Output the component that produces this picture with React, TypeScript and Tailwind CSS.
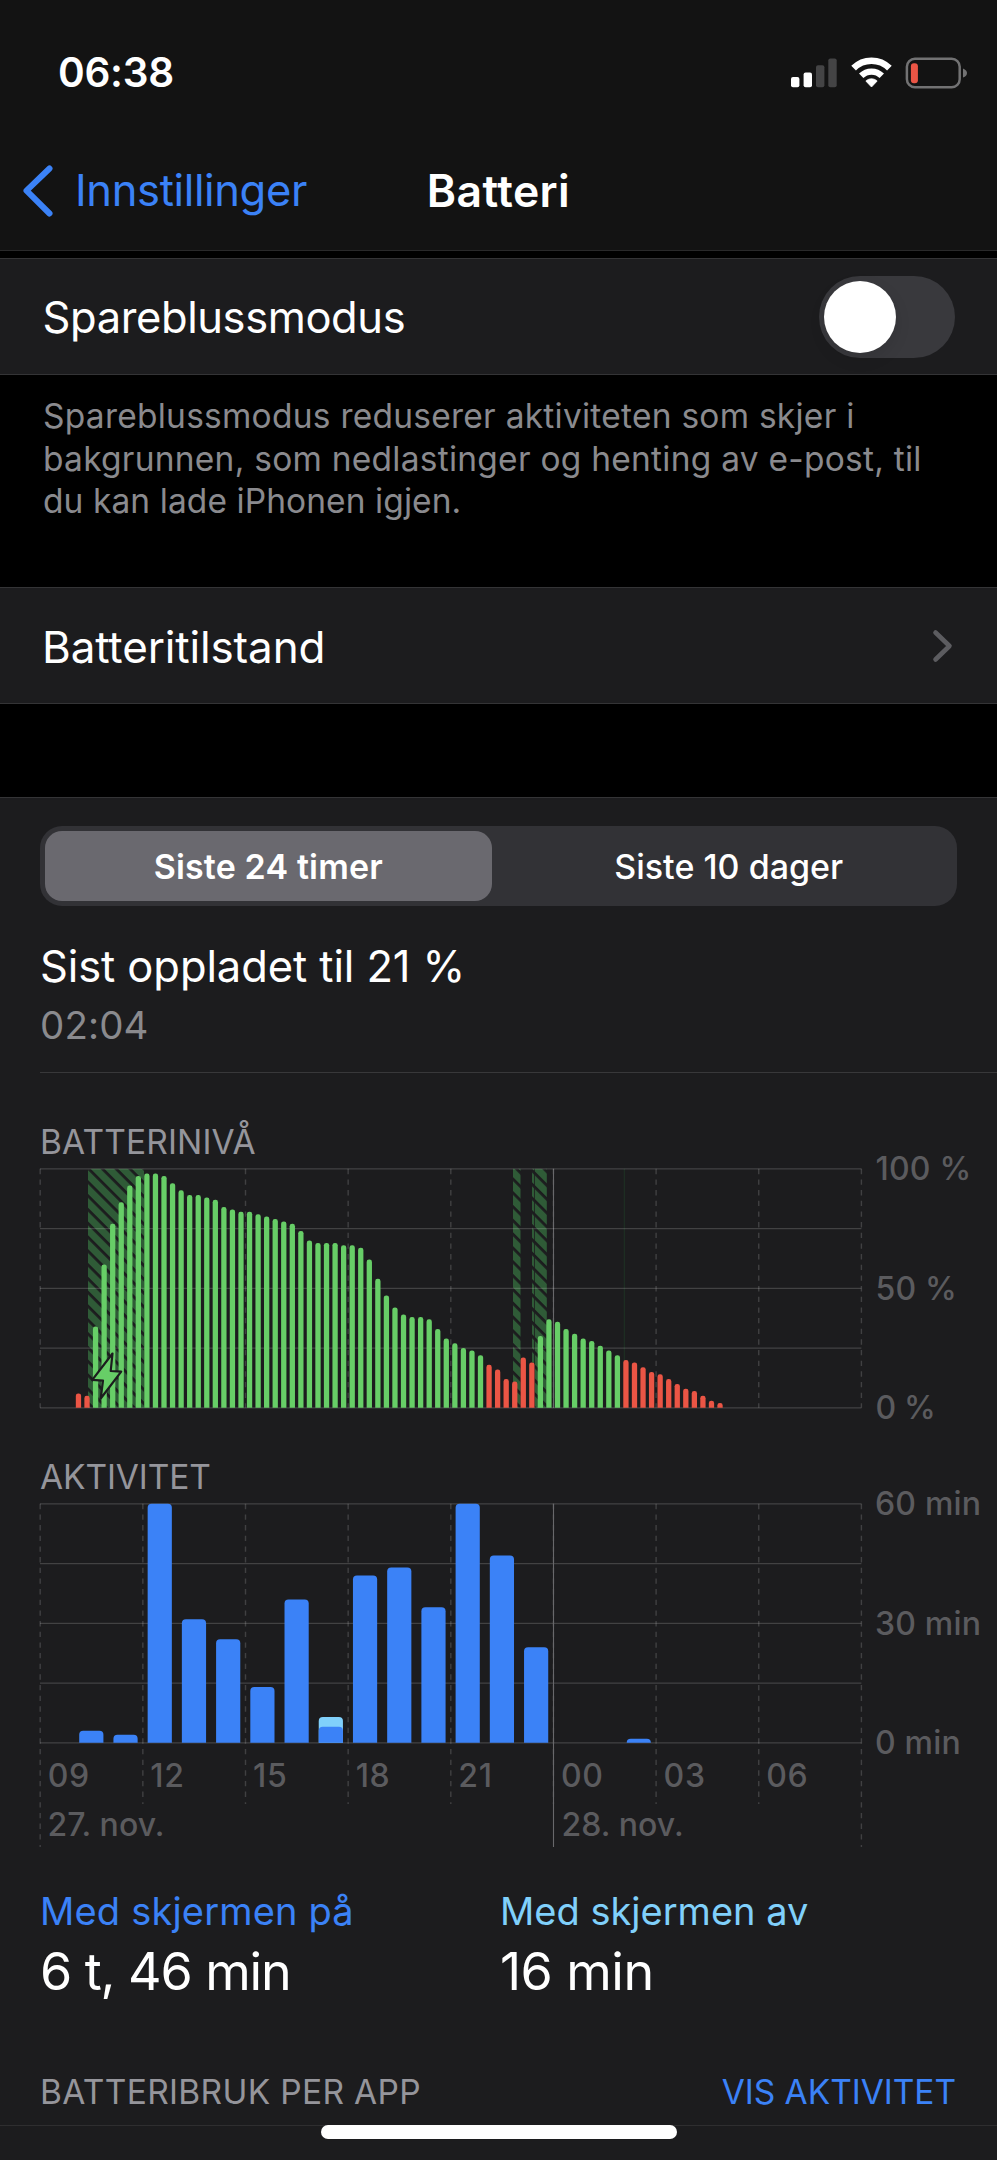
import React from 'react';

// one sample per 15 minutes, starting at 10:00
const FIRST_SAMPLE = 4;
const batteryLevels: number[] = [
  6, 5, 34, 60, 77, 86, 93, 97, 98, 98, 97, 94, 91, 89, 89, 88, 87, 84, 83, 82,
  82, 81, 80, 79, 78, 77, 74, 70, 69, 69, 69, 68, 68, 67, 62, 54, 47, 42, 39, 38,
  38, 37, 33, 29, 27, 25, 24, 22, 18, 16, 12, 11, 21, 19, 30, 37, 36, 33, 31, 29,
  28, 26, 24, 22, 20, 19, 17, 15, 14, 12, 10, 8, 7, 5, 3, 2,
];

// minutes per hour, starting at 09
const activity: { on: number; off?: number }[] = [
  { on: 0 }, { on: 3 }, { on: 2 }, { on: 60 }, { on: 31 }, { on: 26 },
  { on: 14 }, { on: 36 }, { on: 4, off: 2.5 }, { on: 42 }, { on: 44 }, { on: 34 },
  { on: 60 }, { on: 47 }, { on: 24 }, { on: 0 }, { on: 0 }, { on: 1 },
];

const hours = ['09', '12', '15', '18', '21', '00', '03', '06'];

const PLOT_X = 0.2;
const PLOT_W = 821.2;
const TOP = 0.8;
const PLOT_H = 239;
const BOTTOM = TOP + PLOT_H;

const isLow = (level: number, i: number) => level <= 20 || i === 52;

const topRounded = (x: number, y: number, w: number, r: number) => {
  const rad = Math.min(r, BOTTOM - y);
  return `M${x} ${BOTTOM}V${y + rad}a${rad} ${rad} 0 0 1 ${rad} ${-rad}h${w - 2 * rad}a${rad} ${rad} 0 0 1 ${rad} ${rad}V${BOTTOM}z`;
};

const HorizontalGrid: React.FC = () => (
  <g>
    {[0, 1, 2, 3, 4].map((i) => (
      <line
        key={i}
        x1={0}
        x2={PLOT_X + PLOT_W}
        y1={TOP + (PLOT_H / 4) * i}
        y2={TOP + (PLOT_H / 4) * i}
        stroke="#ffffff"
        strokeOpacity={0.17}
        strokeWidth={1.2}
      />
    ))}
  </g>
);

const AxisLabel: React.FC<{ x: number; y: number; spacing?: number; children: string }> = ({ x, y, spacing = 0.2, children }) => (
  <text x={x} y={y} fontSize={32} fontWeight={500} letterSpacing={spacing} fill="#5b5b5e">
    {children}
  </text>
);

const BatteryChart: React.FC = () => {
  const step = PLOT_W / 96;
  return (
    <svg className="block h-[256px] w-[957px] overflow-visible" viewBox="0 0 957 256">
      <defs>
        <pattern id="hatch" width="9.76" height="9.76" patternUnits="userSpaceOnUse" patternTransform="translate(48 12) rotate(45)">
          <rect width="9.76" height="9.76" fill="#2f5b37" />
          <rect width="9.76" height="2.8" fill="#1c1c1e" />
        </pattern>
      </defs>
      {[0, 1, 2, 3, 4, 5, 6, 7, 8].map((i) => (
        <line
          key={i}
          x1={PLOT_X + (PLOT_W / 8) * i}
          x2={PLOT_X + (PLOT_W / 8) * i}
          y1={TOP}
          y2={BOTTOM}
          stroke="#404042"
          strokeWidth={1.4}
          strokeDasharray="5.33 5.33"
        />
      ))}
      <line x1={513.5} x2={513.5} y1={TOP} y2={BOTTOM} stroke="#68686b" strokeWidth={1.1} />
      <line x1={584.3} x2={584.3} y1={TOP} y2={BOTTOM} stroke="#1f3323" strokeWidth={1} />
      <rect x={48} y={TOP} width={56} height={PLOT_H} fill="url(#hatch)" />
      <rect x={473} y={TOP} width={7.5} height={PLOT_H} fill="url(#hatch)" />
      <rect x={492} y={TOP} width={2} height={PLOT_H} fill="url(#hatch)" />
      <rect x={494.8} y={TOP} width={12} height={PLOT_H} fill="url(#hatch)" />
      <HorizontalGrid />
      {batteryLevels.map((level, i) => (
        <path
          key={i}
          d={topRounded(PLOT_X + step * (i + FIRST_SAMPLE) + 1.4, BOTTOM - (PLOT_H * level) / 100, 5.3, 2.4)}
          fill={isLow(level, i) ? '#eb5545' : '#67ce67'}
        />
      ))}
      <path
        d="M72.5 185.5L52.3 211.8L63 212.6L60.7 230.5L81.2 203.7L70.7 203z"
        fill="#67ce67"
        stroke="#1c1c1e"
        strokeWidth={2.2}
        strokeLinejoin="round"
      />
      <AxisLabel x={835.5} y={12}>100 %</AxisLabel>
      <AxisLabel x={835.5} y={131.5}>50 %</AxisLabel>
      <AxisLabel x={835.5} y={251} spacing={-0.3}>0 %</AxisLabel>
    </svg>
  );
};

const ActivityChart: React.FC = () => {
  const step = PLOT_W / 24;
  return (
    <svg className="block h-[345px] w-[957px] overflow-visible" viewBox="0 0 957 345">
      {[0, 1, 2, 3, 4, 5, 6, 7, 8].map((i) => (
        <line
          key={i}
          x1={PLOT_X + (PLOT_W / 8) * i}
          x2={PLOT_X + (PLOT_W / 8) * i}
          y1={TOP}
          y2={i === 0 || i === 8 ? 344 : 301}
          stroke="#404042"
          strokeWidth={1.4}
          strokeDasharray="5.33 5.33"
        />
      ))}
      <HorizontalGrid />
      <line x1={513.5} x2={513.5} y1={TOP} y2={344} stroke="#68686b" strokeWidth={1.1} />
      {activity.map(({ on, off }, i) => {
        const x = PLOT_X + step * i + 4.8;
        return (
          <g key={i}>
            {off && <path d={topRounded(x, BOTTOM - (PLOT_H * (on + off)) / 60, 24.2, 4)} fill="#80d0fb" />}
            {on > 0 && <path d={topRounded(x, BOTTOM - (PLOT_H * on) / 60, 24.2, 4)} fill="#3b82f7" />}
          </g>
        );
      })}
      {hours.map((h, i) => (
        <AxisLabel key={h} x={PLOT_X + (PLOT_W / 8) * i + 7.5} y={283.5} spacing={0.7}>
          {h}
        </AxisLabel>
      ))}
      <AxisLabel x={7.5} y={332.5} spacing={0.05}>27. nov.</AxisLabel>
      <AxisLabel x={521.5} y={332.5} spacing={0.05}>28. nov.</AxisLabel>
      <AxisLabel x={835} y={12}>60 min</AxisLabel>
      <AxisLabel x={835} y={131.5}>30 min</AxisLabel>
      <AxisLabel x={835} y={251}>0 min</AxisLabel>
    </svg>
  );
};

const StatusIcons: React.FC = () => (
  <div className="flex items-center">
    <svg className="h-[32px] w-[48px]" viewBox="0 0 48 32">
      <rect x="1" y="20" width="8.4" height="10.3" rx="2" fill="#fff" />
      <rect x="13.6" y="15.5" width="8.4" height="14.8" rx="2" fill="#fff" />
      <rect x="26" y="8.3" width="8.4" height="22" rx="2" fill="#444445" />
      <rect x="38.3" y="1.5" width="8.4" height="28.8" rx="2" fill="#444445" />
    </svg>
    <svg className="ml-[13px] h-[32px] w-[41px]" viewBox="0 0 41 32" fill="none">
      <path d="M2.6 11.2A25.3 25.3 0 0 1 38.4 11.2" stroke="#fff" strokeWidth="6.6" />
      <path d="M10.2 18.8A14.6 14.6 0 0 1 30.8 18.8" stroke="#fff" strokeWidth="6.2" />
      <path d="M20.5 30L15.2 24.4Q14.8 23.9 15.3 23.5Q20.5 20 25.7 23.5Q26.2 23.9 25.8 24.4Z" fill="#fff" stroke="#fff" strokeWidth="0.8" strokeLinejoin="round" />
    </svg>
    <svg className="ml-[13px] h-[32px] w-[63px]" viewBox="0 0 63 32">
      <rect x="1.9" y="1.7" width="52.8" height="28.6" rx="8" fill="none" stroke="#727273" strokeWidth="2.5" />
      <rect x="5.9" y="6.2" width="7" height="20" rx="3" fill="#eb5545" />
      <path d="M58 11.4Q62 13 62 16Q62 19 58 20.6z" fill="#727273" />
    </svg>
  </div>
);

const Header: React.FC = () => (
  <header className="h-[251px] border-b border-[#29292a] bg-[#131313]">
    <div className="flex h-[145px] items-center justify-between pl-[58px] pr-[29px]">
      <span className="pt-px text-[40.5px] font-semibold tracking-[-0.25px]">06:38</span>
      <StatusIcons />
    </div>
    <div className="grid h-[92px] grid-cols-[1fr_auto_1fr] items-center">
      <div className="flex items-center pl-[22px] text-[#3b82f7]">
        <svg className="h-[52px] w-[31px]" viewBox="0 0 31 52" fill="none">
          <path d="M27.5 3.5L4.5 25.7L27.5 48.5" stroke="currentColor" strokeWidth="6" strokeLinecap="round" strokeLinejoin="round" />
        </svg>
        <span className="ml-[22px] text-[43.5px] tracking-[-0.35px]">Innstillinger</span>
      </div>
      <h1 className="text-[44.5px] font-semibold tracking-[0.4px]">Batteri</h1>
    </div>
  </header>
);

const LegendItem: React.FC<{ label: string; value: string; labelClass: string; valueClass: string }> = ({ label, value, labelClass, valueClass }) => (
  <div>
    <p className={`text-[38px] leading-[46px] ${labelClass}`}>{label}</p>
    <p className={`mt-[7px] text-[52px] leading-[62px] ${valueClass}`}>{value}</p>
  </div>
);

const App: React.FC = () => {
  return (
    <div className="relative h-[2160px] w-[997px] overflow-hidden bg-black font-[Inter,sans-serif] text-white">
      <Header />

      <section className="mt-[7px] flex h-[117px] items-center justify-between border-y border-[#343436] bg-[#1c1c1e] pl-[42.5px] pr-[42px]">
        <span className="pt-[2px] text-[43.5px] tracking-[-0.4px]">Spareblussmodus</span>
        <div className="flex h-[82px] w-[136px] items-center rounded-full bg-[#39393d] p-[5px]">
          <div className="size-[72px] rounded-full bg-white shadow-[0_6px_16px_rgba(0,0,0,0.1)]" />
        </div>
      </section>

      <p className="h-[212px] whitespace-nowrap pl-[43px] pt-[20px] text-[33.5px] leading-[42.6px] tracking-[0.25px] text-[#8a8a8e]">
        Spareblussmodus reduserer aktiviteten som skjer i
        <br />
        bakgrunnen, som nedlastinger og henting av e-post, til
        <br />
        <span className="tracking-[0.08px]">du kan lade iPhonen igjen.</span>
      </p>

      <section className="flex h-[117px] items-center justify-between border-y border-[#343436] bg-[#1c1c1e] pl-[42px] pr-[43px]">
        <span className="pt-[2px] text-[44px] tracking-[-0.15px]">Batteritilstand</span>
        <svg className="h-[34px] w-[22px]" viewBox="0 0 22 34" fill="none">
          <path d="M3.5 3.5L17.5 17L3.5 30.5" stroke="#5c5c60" strokeWidth="4.6" strokeLinecap="round" strokeLinejoin="round" />
        </svg>
      </section>

      <section className="mt-[93px] h-[1363px] border-t border-[#343436] bg-[#1c1c1e] pt-[28px]">
        <div className="mx-[40px] flex h-[80px] gap-[14px] rounded-[22px] bg-[#323236] p-[5px] text-[34px]">
          <div className="flex flex-1 items-center justify-center rounded-[17px] bg-[#6a696f] pt-px font-semibold tracking-[0.15px]">Siste 24 timer</div>
          <div className="flex flex-1 items-center justify-center pt-px font-medium tracking-[0.02px]">Siste 10 dager</div>
        </div>

        <div className="ml-[40px] mt-[34px] h-[132.5px] border-b border-[#38383a]">
          <p className="text-[43.5px] leading-[52px] tracking-[-0.1px]">Sist oppladet til 21 %</p>
          <p className="mt-[10px] text-[38.5px] leading-[46px] tracking-[0.1px] text-[#8a8a8e]">02:04</p>
        </div>

        <div className="pl-[40px]">
          <h2 className="mt-[49px] text-[33.5px] leading-[40px] tracking-[0.13px] text-[#95959b]">BATTERINIVÅ</h2>
          <div className="mt-[6.5px]">
            <BatteryChart />
          </div>
          <h2 className="mt-[33px] text-[33.5px] leading-[40px] tracking-[-0.1px] text-[#95959b]">AKTIVITET</h2>
          <div className="mt-[6px]">
            <ActivityChart />
          </div>
        </div>

        <div className="mt-[40px] grid grid-cols-[460px_1fr] pl-[40px]">
          <LegendItem label="Med skjermen på" value="6 t, 46 min" labelClass="text-[#3b82f7] tracking-[0.18px]" valueClass="tracking-[-1.1px]" />
          <LegendItem label="Med skjermen av" value="16 min" labelClass="text-[#80d0fb]" valueClass="tracking-[-0.55px]" />
        </div>

        <div className="mt-[69px] flex h-[54px] justify-between border-b border-[#2e2e30] pl-[40px] pr-[41px] text-[33.5px] leading-[40px]">
          <h2 className="tracking-[0.32px] text-[#95959b]">BATTERIBRUK PER APP</h2>
          <span className="tracking-[-0.04px] text-[#3b82f7]">VIS AKTIVITET</span>
        </div>
      </section>

      <div className="absolute bottom-[21px] left-[321px] h-[14px] w-[356px] rounded-full bg-white" />
    </div>
  );
};

export default App;
